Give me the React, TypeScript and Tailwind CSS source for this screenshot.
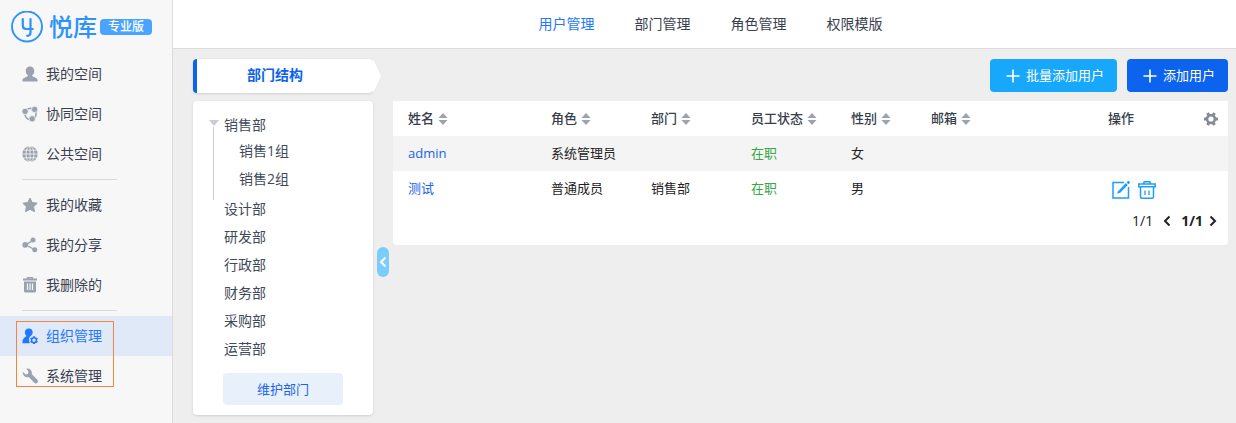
import { useState } from 'react';
import type { ReactNode } from 'react';

const IconUser = () => (
  <svg viewBox="0 0 16 16" className="size-4" fill="currentColor">
    <path d="M8 0.6c2.6 0 4.3 1.9 4.3 4.4 0 1.9-.9 3.4-2.2 4.2v.8l3.9 1.9c1 .5 1.6 1.4 1.6 2.6v.9H.4v-.9c0-1.200.6-2.100 1.600-2.600l3.900-1.900v-.8C4.600 8.400 3.700 6.900 3.700 5 3.700 2.500 5.400.6 8 .6z" />
  </svg>
);

const IconTeam = () => (
  <svg viewBox="0 0 16 16" className="size-4">
    <circle cx="8.500" cy="8" r="5.600" fill="none" stroke="currentColor" strokeWidth="1.600" />
    <g fill="currentColor" stroke="#f7f7f7" strokeWidth="0.800">
      <circle cx="3.100" cy="5.400" r="3.200" />
      <circle cx="12.600" cy="3.400" r="3.200" />
      <circle cx="10.200" cy="12.800" r="3.200" />
    </g>
  </svg>
);

const IconGlobe = () => (
  <svg viewBox="0 0 16 16" className="size-4">
    <circle cx="8" cy="8" r="7.700" fill="currentColor" />
    <g fill="none" stroke="#f7f7f7" strokeWidth="0.800">
      <path d="M8 0v16M0 8h16M1.500 4.200h13M1.500 11.800h13" />
      <ellipse cx="8" cy="8" rx="4" ry="7.800" />
    </g>
  </svg>
);

const IconStar = () => (
  <svg viewBox="0 0 16 16" className="size-4" fill="currentColor" stroke="currentColor" strokeLinejoin="round">
    <path d="M8 1l2.200 4.500 5 .7-3.600 3.500.9 5L8 12.300l-4.500 2.400.9-5L.8 6.200l5-.7z" />
  </svg>
);

const IconShare = () => (
  <svg viewBox="0 0 16 16" className="size-4" fill="currentColor">
    <path d="M11 3.500L3.500 7.800l9 4.700" fill="none" stroke="currentColor" strokeWidth="1.400" />
    <circle cx="11" cy="3" r="2.500" />
    <circle cx="3.200" cy="7.800" r="2.900" />
    <circle cx="12.700" cy="12.800" r="2.500" />
  </svg>
);

const IconTrash = () => (
  <svg viewBox="0 0 16 16" className="size-4">
    <path d="M5.500 1.700V.8h5v.9" fill="none" stroke="currentColor" strokeWidth="1.400" />
    <path d="M1 1.600h14v2H1zM2 4.500h12v9.500c0 .9-.6 1.500-1.500 1.500h-9c-.9 0-1.500-.6-1.500-1.500z" fill="currentColor" />
    <path d="M5.500 6.500v6.500M8 6.500v6.500M10.500 6.500v6.500" stroke="#f7f7f7" strokeWidth="1.200" />
  </svg>
);

const IconOrg = () => (
  <svg viewBox="0 0 16 16" className="size-4" fill="currentColor">
    <path d="M6.800.4c2.400 0 3.900 1.700 3.900 3.900 0 1.500-.7 2.800-1.700 3.500-1.400.9-2 2.200-2 3.900 0 1.400.4 2.500 1 3.500H.4c0-3.300.8-5.200 4.200-7.200-1-.8-1.700-2.100-1.700-3.700C2.900 2.100 4.400.4 6.800.4z" />
    <path d="M12 8.300v7.800M8.600 10.250l6.800 3.900M15.400 10.250l-6.800 3.900" stroke="currentColor" strokeWidth="2" />
    <circle cx="12" cy="12.200" r="2.400" fill="#e0e9f8" stroke="currentColor" strokeWidth="1.500" />
  </svg>
);

const IconWrench = () => (
  <svg viewBox="0 0 16 16" className="size-4" fill="currentColor">
    <path d="M4.300.6C7.600-.3 10.600 2.600 9.700 6l5.600 5.700c.9 1 .9 2.300.1 3.100-.9.900-2.200.8-3.100-.1L6.700 9.100C3.500 10 .3 7.200.9 3.800l2.800 2.600 2.200-.5.600-2.200z" />
  </svg>
);

const IconPlus = () => (
  <svg viewBox="0 0 14 14" className="size-3.5" fill="none" stroke="currentColor" strokeWidth="1.600">
    <path d="M7 .5v13M.5 7h13" />
  </svg>
);

const IconSort = () => (
  <svg viewBox="0 0 10 12" className="h-3 w-2.5" fill="#9ba3ae">
    <path d="M5 0l4.500 5h-9zM5 12l4.500-5h-9z" />
  </svg>
);

const IconGear = () => (
  <svg viewBox="0 0 14 14" className="size-3.5" fill="none" stroke="#838b98">
    <circle cx="7" cy="7" r="3.900" strokeWidth="2.600" />
    <path d="M0 7h2.500M11.500 7H14M3.500.9l1.300 2.300M10.500.9L9.200 3.200M3.500 13.100l1.300-2.300M10.500 13.100l-1.300-2.300" strokeWidth="3" />
  </svg>
);

const IconEdit = () => (
  <svg viewBox="0 0 18 18" className="size-[18px]" fill="none" stroke="currentColor">
    <path d="M12 1.500H1v15.500h15.500V6" strokeWidth="1.500" />
    <path d="M7.300 10.800L14.800 3" strokeWidth="2.600" />
    <path d="M15.500 2.300L17.300.5" strokeWidth="2.600" />
    <path d="M5.300 12.800l.8-3.200 2.400 2.200z" fill="currentColor" stroke="none" />
  </svg>
);

const IconDelete = () => (
  <svg viewBox="0 0 18 18" className="size-[18px]" fill="none" stroke="currentColor" strokeWidth="1.500">
    <path d="M5.300 2.800L6.300.8h5.400l1 2M.8 5.800V3h16.400v2.800zM2.500 6v9.700c0 .9.500 1.500 1.400 1.500h10.200c.9 0 1.400-.6 1.400-1.500V6" />
    <path d="M7 9.500v4.500M11 9.500v4.500" strokeWidth="1.300" />
  </svg>
);

const IconChevron = ({ right }: { right?: boolean }) => (
  <svg viewBox="0 0 8 12" className="h-3 w-2" fill="none" stroke="currentColor" strokeWidth="2">
    <path d={right ? 'M1.500 1.500L6 6l-4.500 4.500' : 'M6.500 1.500L2 6l4.500 4.500'} />
  </svg>
);

type MenuItem = { label: string; icon: ReactNode };

const spaceMenu: MenuItem[] = [
  { label: '我的空间', icon: <IconUser /> },
  { label: '协同空间', icon: <IconTeam /> },
  { label: '公共空间', icon: <IconGlobe /> },
];

const myMenu: MenuItem[] = [
  { label: '我的收藏', icon: <IconStar /> },
  { label: '我的分享', icon: <IconShare /> },
  { label: '我删除的', icon: <IconTrash /> },
];

const adminMenu: MenuItem[] = [
  { label: '组织管理', icon: <IconOrg /> },
  { label: '系统管理', icon: <IconWrench /> },
];

const tabs = ['用户管理', '部门管理', '角色管理', '权限模版'];

const departments = ['设计部', '研发部', '行政部', '财务部', '采购部', '运营部'];

const columns = [
  { label: '姓名', width: 'w-[158px] pl-[15px]' },
  { label: '角色', width: 'w-[100px]' },
  { label: '部门', width: 'w-[100px]' },
  { label: '员工状态', width: 'w-[100px]' },
  { label: '性别', width: 'w-[80px]' },
  { label: '邮箱', width: '' },
];

const users = [
  { name: 'admin', role: '系统管理员', dept: '', status: '在职', gender: '女', email: '', editable: false },
  { name: '测试', role: '普通成员', dept: '销售部', status: '在职', gender: '男', email: '', editable: true },
];

function MenuGroup({ items, active }: { items: MenuItem[]; active?: string }) {
  return (
    <ul>
      {items.map((item) => (
        <li key={item.label}>
          <a
            href="#"
            className={`flex h-10 items-center gap-2 pl-[22px] text-sm ${
              item.label === active ? 'bg-[#e0e9f8] text-[#1f78ff]' : 'text-[#3a4050]'
            }`}
          >
            <span className={item.label === active ? 'text-[#1f78ff]' : 'text-[#9aa2af]'}>{item.icon}</span>
            {item.label}
          </a>
        </li>
      ))}
    </ul>
  );
}

function Sidebar() {
  return (
    <aside className="w-[173px] shrink-0 border-r border-[#dcdcdc] bg-[#f7f7f7]">
      {/* Logo */}
      <div className="flex h-[54px] items-center pl-[11px]">
        <svg viewBox="0 0 32 32" className="size-8" fill="none" stroke="#2b93fb">
          <circle cx="16" cy="15.500" r="15" strokeWidth="1.900" />
          <path
            d="M11.800 8v6.500c0 2.300 1.300 3.500 3.500 3.500h6.500M19.500 8v13.500c0 2.200-1.200 3.300-3.300 3.300"
            strokeWidth="2.200"
            strokeLinecap="round"
          />
        </svg>
        <span className="ml-1.5 text-2xl leading-8 font-medium text-[#2b93fb]">悦库</span>
        <span className="ml-[3px] h-4 rounded bg-[#4aa3ff] px-2 text-xs leading-4 font-medium text-white">专业版</span>
      </div>

      <nav>
        <MenuGroup items={spaceMenu} />
        <hr className="my-[5px] mr-[55px] ml-[22px] border-[#dadada]" />
        <MenuGroup items={myMenu} />
        <hr className="my-[5px] mr-[55px] ml-[22px] border-[#dadada]" />
        <div className="relative">
          <MenuGroup items={adminMenu} active="组织管理" />
          <div className="pointer-events-none absolute top-[5px] left-4 h-[66px] w-[98px] border border-[#f5843c]" />
        </div>
      </nav>
    </aside>
  );
}

function DepartmentTree() {
  return (
    <div className="w-[180px] shrink-0 self-start rounded bg-white py-2.5 text-sm text-[#3f4a5a] shadow-sm">
      <div className="mb-0.5 flex gap-[5px] pl-4">
        <div className="-mb-[7px] flex w-2.5 flex-col pt-[9px]">
          <svg viewBox="0 0 10 6" className="h-1.5 w-2.5 shrink-0" fill="#c9cdda">
            <path d="M0 0h10L5 6z" />
          </svg>
          <div className="mt-px ml-1 w-px flex-1 bg-[#cfcfd6]" />
        </div>
        <div>
          <div className="h-[26px] leading-7">销售部</div>
          <ul className="pl-[15px] leading-7">
            <li>销售1组</li>
            <li>销售2组</li>
          </ul>
        </div>
      </div>
      <ul className="pl-[31px] leading-7">
        {departments.map((dept) => (
          <li key={dept}>{dept}</li>
        ))}
      </ul>
      <button type="button" className="mt-2.5 ml-[30px] block h-8 w-[120px] rounded bg-[#e8f1fb] text-[13px] text-[#1a63ec]">
        维护部门
      </button>
    </div>
  );
}

function UserTable() {
  return (
    <div className="min-w-0 flex-1 self-start rounded-b bg-white">
      <table className="w-full table-fixed text-left text-[13px] text-[#222222]">
        <thead>
          <tr className="h-[35px] text-[#363d4b]">
            {columns.map((col) => (
              <th key={col.label} className={`font-medium ${col.width}`}>
                <span className="flex items-center gap-1">
                  {col.label}
                  <IconSort />
                </span>
              </th>
            ))}
            <th className="w-[86px] font-medium">操作</th>
            <th className="w-[34px]">
              <button type="button" aria-label="设置" className="mx-auto block w-fit">
                <IconGear />
              </button>
            </th>
          </tr>
        </thead>
        <tbody>
          {users.map((user) => (
            <tr key={user.name} className="h-[35px] odd:bg-[#f4f4f4]">
              <td className="pl-[15px]">
                <a href="#" className="text-[#1a63ec]">{user.name}</a>
              </td>
              <td>{user.role}</td>
              <td>{user.dept}</td>
              <td className="text-[#35a845]">{user.status}</td>
              <td>{user.gender}</td>
              <td>{user.email}</td>
              <td>
                {user.editable && (
                  <div className="flex gap-2 pt-0.5 pl-1 text-[#1f9dfa]">
                    <button type="button" aria-label="编辑"><IconEdit /></button>
                    <button type="button" aria-label="删除"><IconDelete /></button>
                  </div>
                )}
              </td>
              <td />
            </tr>
          ))}
        </tbody>
      </table>

      {/* Pagination */}
      <div className="flex items-center justify-end gap-2.5 pt-[5px] pr-[11px] pb-3.5 text-sm text-[#222222]">
        <span>1/1</span>
        <button type="button" aria-label="上一页"><IconChevron /></button>
        <div className="flex items-center gap-1.5">
          <b>1/1</b>
          <button type="button" aria-label="下一页"><IconChevron right /></button>
        </div>
      </div>
    </div>
  );
}

export default function App() {
  const [tab, setTab] = useState('用户管理');

  return (
    <div className="flex min-h-screen bg-[#eeeeee] font-['Open_Sans','Noto_Sans_CJK_SC',sans-serif]">
      <Sidebar />

      <div className="flex min-w-0 flex-1 flex-col">
        {/* Top tabs */}
        <header className="flex h-[49px] items-center justify-center gap-10 border-b border-[#dcdcdc] bg-white pl-3 text-sm">
          {tabs.map((name) => (
            <button
              key={name}
              type="button"
              onClick={() => setTab(name)}
              className={name === tab ? 'text-[#1f78ff]' : 'text-[#3a4050]'}
            >
              {name}
            </button>
          ))}
        </header>

        <main className="flex flex-1 flex-col gap-2 pt-2.5 pr-2 pl-5">
          <div className="flex items-start justify-between">
            <div className="flex">
              <h2 className="h-[34px] w-[180px] rounded border-l-4 border-[#0b63ee] bg-white pr-5 text-center text-sm leading-8 font-bold text-[#0b63ee] shadow-sm">
                部门结构
              </h2>
              <svg viewBox="0 0 8 34" className="h-[34px] w-2" fill="#ffffff">
                <path d="M0 0l8 17-8 17z" />
              </svg>
            </div>
            <div className="flex gap-2.5 text-[13px] text-white">
              <button type="button" className="flex h-[33px] items-center gap-1.5 rounded bg-[#18a8fb] pr-[13px] pl-4">
                <IconPlus />
                批量添加用户
              </button>
              <button type="button" className="flex h-[33px] items-center gap-1.5 rounded bg-[#0b63ee] pr-[13px] pl-4">
                <IconPlus />
                添加用户
              </button>
            </div>
          </div>

          <div className="flex flex-1">
            <DepartmentTree />
            <div className="flex w-5 shrink-0 items-center justify-center">
              <button type="button" aria-label="收起" className="flex h-[30px] w-3 items-center justify-center rounded-full bg-[#7acdfb] text-white">
                <IconChevron />
              </button>
            </div>
            <UserTable />
          </div>
        </main>
      </div>
    </div>
  );
}
